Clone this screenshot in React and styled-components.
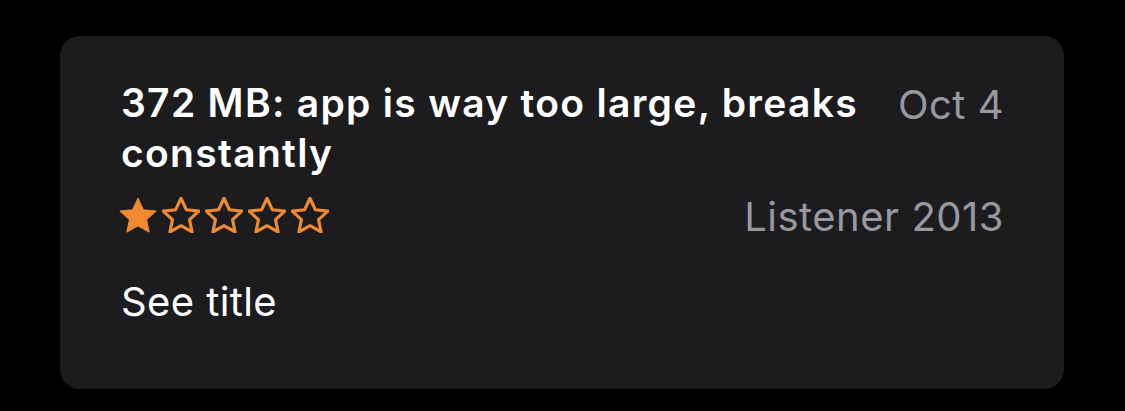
import React from "react";
import styled, { createGlobalStyle } from "styled-components";

const GlobalStyle = createGlobalStyle`
  html, body {
    margin: 0;
    padding: 0;
    background: #000000;
  }
  body {
    font-family: Inter, "Noto Sans", sans-serif;
    -webkit-font-smoothing: antialiased;
  }
`;

const Page = styled.div`
  padding: 36px 0 0 60px;
`;

const Card = styled.div`
  width: 1004px;
  height: 353px;
  box-sizing: border-box;
  background: #1c1c1e;
  border-radius: 20px;
  padding: 42px 60px 0 61px;
`;

const Row = styled.div`
  display: flex;
  justify-content: space-between;
  align-items: flex-start;
  gap: 30px;
  margin-top: ${(p) => p.$top || 0}px;
`;

const Title = styled.div`
  color: #ffffff;
  font-size: 39px;
  font-weight: 600;
  line-height: 50px;
  letter-spacing: 1.3px;
  white-space: nowrap;
`;

const Meta = styled.div`
  color: #98989e;
  font-size: 40px;
  font-weight: 400;
  line-height: 50px;
  letter-spacing: 0.5px;
  white-space: nowrap;
  margin-top: ${(p) => p.$top || 0}px;
`;

const Stars = styled.div`
  display: flex;
  gap: 5px;
  margin-top: 5px;
  margin-left: -2px;
`;

const Body = styled.div`
  color: #ffffff;
  font-size: 40px;
  line-height: 50px;
  letter-spacing: 0.4px;
  margin-top: 35px;
`;

const STAR =
  "M12 2.2l2.95 6.36 6.97.78-5.18 4.72 1.42 6.86L12 17.47l-6.16 3.45 1.42-6.86L2.08 9.34l6.97-.78z";

const Star = ({ filled }) => (
  <svg width="38" height="36" viewBox="1.6 1.5 20.8 20">
    <path
      d={STAR}
      fill={filled ? "#f0892f" : "none"}
      stroke="#f0892f"
      strokeWidth={filled ? 0.6 : 1.75}
      strokeLinejoin="round"
    />
  </svg>
);

export default function App() {
  const rating = 1;
  return (
    <>
      <GlobalStyle />
      <Page>
        <Card>
          <Row>
            <Title>
              372 MB: app is way too large, breaks
              <br />
              constantly
            </Title>
            <Meta $top={2}>Oct 4</Meta>
          </Row>
          <Row $top={14}>
            <Stars>
              {[0, 1, 2, 3, 4].map((i) => (
                <Star key={i} filled={i < rating} />
              ))}
            </Stars>
            <Meta>Listener 2013</Meta>
          </Row>
          <Body>See title</Body>
        </Card>
      </Page>
    </>
  );
}
